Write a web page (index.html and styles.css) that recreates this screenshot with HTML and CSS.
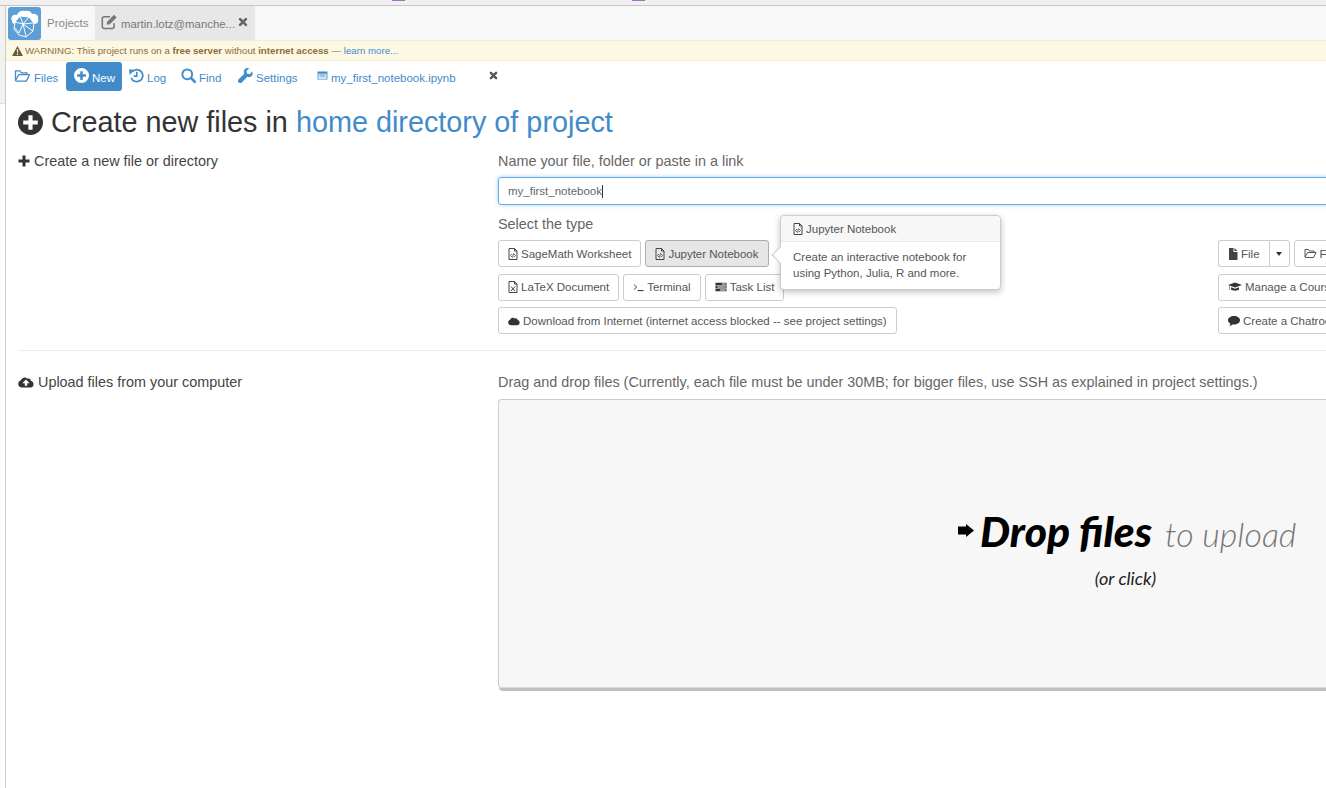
FILE: index.html
```html
<!DOCTYPE html>
<html lang="en">
<head>
<meta charset="utf-8">
<title>Create new files</title>
<link rel="stylesheet" href="styles.css">
</head>
<body>
<svg class="sprite" width="0" height="0" aria-hidden="true">
  <symbol id="i-plus-circle" viewBox="0 0 24 24"><path fill-rule="evenodd" d="M12 0a12 12 0 1 1 0 24a12 12 0 0 1 0-24zM10 5v5H5v4h5v5h4v-5h5v-4h-5V5z"/></symbol>
  <symbol id="i-folder" viewBox="0 0 26 22"><path fill="none" stroke="currentColor" stroke-width="2" stroke-linejoin="round" d="M2 18V3h7l2 3h9v3M2 18l5-9h17l-5 10H3z"/></symbol>
  <symbol id="i-history" viewBox="0 0 24 24"><path fill="none" stroke="currentColor" stroke-width="2.8" d="M5 6a9.6 9.6 0 1 1-1.6 9.5"/><path d="M0 2l9 1-8 8z"/><path fill="none" stroke="currentColor" stroke-width="2.6" d="M12.500 6v7h-5"/></symbol>
  <symbol id="i-search" viewBox="0 0 24 24"><circle cx="10" cy="10" r="7.8" fill="none" stroke="currentColor" stroke-width="3.2"/><path fill="none" stroke="currentColor" stroke-width="4" stroke-linecap="round" d="M16 16l6 6"/></symbol>
  <symbol id="i-wrench" viewBox="0 0 24 24"><path d="M23 5.500l-4.600 4.400-4-1-1-4L18 .5c-3-1-6.500 0-8 2.500-1.200 2-1 4 0 6L1 18a3.300 3.300 0 0 0 5 5l9-9c2 1 4 1 6-.5 2.500-1.500 3-5.500 2-8.500z"/></symbol>
  <symbol id="i-list-box" viewBox="0 0 24 20"><path fill-rule="evenodd" d="M1 1h22v18H1zM3 6v11h18V6z"/><path d="M5 8h14v2H5zM5 12h14v2H5z"/></symbol>
  <symbol id="i-times" viewBox="0 0 24 24"><path fill="none" stroke="currentColor" stroke-width="6.500" stroke-linecap="round" d="M5 5l14 14M19 5L5 19"/></symbol>
  <symbol id="i-edit" viewBox="0 0 26 24"><path fill="none" stroke="currentColor" stroke-width="2.400" d="M20 14v5a3 3 0 0 1-3 3H5a3 3 0 0 1-3-3V7a3 3 0 0 1 3-3h9"/><path d="M9 12L20 1l4 4-11 11H9z"/></symbol>
  <symbol id="i-warning" viewBox="0 0 24 22"><path fill-rule="evenodd" d="M12 0l12 22H0zM10.500 7l.5 8h2l.5-8zM10.500 17v3h3v-3z"/></symbol>
  <symbol id="i-plus" viewBox="0 0 24 24"><path d="M9 1h6v8h8v6h-8v8H9v-8H1V9h8z"/></symbol>
  <symbol id="i-file-code" viewBox="0 0 20 24"><path fill="none" stroke="currentColor" stroke-width="2" d="M2 1h11l5 5v17H2zM13 1v5h5"/><path fill="none" stroke="currentColor" stroke-width="1.600" d="M8 12l-3 3 3 3M12 12l3 3-3 3M11 10.500l-2 9"/></symbol>
  <symbol id="i-file-x" viewBox="0 0 20 24"><path fill="none" stroke="currentColor" stroke-width="2" d="M2 1h11l5 5v17H2zM13 1v5h5"/><path fill="none" stroke="currentColor" stroke-width="2" d="M6 11l8 9M14 11l-8 9"/></symbol>
  <symbol id="i-terminal" viewBox="0 0 26 20"><path fill="none" stroke="currentColor" stroke-width="2" d="M2 3l7 6-7 6"/><path d="M11 16h14v2.500H11z"/></symbol>
  <symbol id="i-tasks" viewBox="0 0 26 20"><path fill-rule="evenodd" d="M1 1h24v5H1zM15 2.500V4.500h8V2.500zM1 7.500h24v5H1zM5 9v2h18V9zM1 14h24v5H1zM11 15.500v2h12v-2z"/></symbol>
  <symbol id="i-cloud" viewBox="0 0 26 18"><path d="M6 18a6 6 0 0 1-1.500-11.700A6.500 6.500 0 0 1 15 3.500a4.500 4.500 0 0 1 6 3.500A5.600 5.600 0 0 1 20.500 18z"/></symbol>
  <symbol id="i-cloud-up" viewBox="0 0 26 18"><path fill-rule="evenodd" d="M6 18a6 6 0 0 1-1.500-11.700A6.500 6.500 0 0 1 15 3.500a4.500 4.500 0 0 1 6 3.500A5.600 5.600 0 0 1 20.500 18zM13 5l-6 6h4v4h4v-4h4z"/></symbol>
  <symbol id="i-file" viewBox="0 0 20 24"><path d="M2 0h9v8h8v16H2zM13 0l6 6h-6z"/></symbol>
  <symbol id="i-cap" viewBox="0 0 28 20"><path d="M14 1L0 6l14 5 14-5zM6 10.500V15c3 3 13 3 16 0v-4.500l-8 3z"/><path d="M2 7h1v9H2z"/></symbol>
  <symbol id="i-comment" viewBox="0 0 24 20"><path d="M12 0c6.600 0 12 3.600 12 8.500S18.600 17 12 17c-1 0-2 0-3-.2C7.500 18.500 5 19.500 2.500 20c1.300-1.500 2-3 2.200-4.700C1.800 13.800 0 11.300 0 8.500 0 3.600 5.400 0 12 0z"/></symbol>
  <symbol id="i-arrow" viewBox="0 0 20 16"><path d="M0 3h10V0l10 8-10 8v-3H0z"/></symbol>
</svg>

<div class="chrome-top">
  <span class="mark mark-a"></span>
  <span class="mark mark-b"></span>
</div>

<div class="shell">
  <div class="gutter"><div class="gutter-top"></div></div>
  <div class="app">
    <header class="topnav">
      <div class="logo">
        <svg viewBox="0 0 33 33" width="33" height="33">
          <path fill="#fff" d="M4 14c-2-4 1-7 5-6 1-4 5-5 8-4 3-1 6 0 7 3 4-1 7 2 6 5 1 3-1 5-4 5H7c-2 0-3-1-3-3z"/>
          <path fill="#5b9fd6" d="M7 15l5-6 9 1 5 6-1 8-7 6-7-2-5-6z"/>
          <path fill="none" stroke="#fff" stroke-width="1" d="M7 15l5-6 9 1 5 6-1 8-7 6-7-2-5-6zM12 9l3 8 6-7M15 17l10-1M15 17l-8-2M15 17l-4 9M15 17l3 12M15 17l10 7M7 21l4 5"/>
        </svg>
      </div>
      <a class="tab-projects">Projects</a>
      <div class="tab-project">
        <svg class="ic ic-edit"><use href="#i-edit"/></svg>
        <span>martin.lotz@manche...</span>
        <svg class="ic ic-close"><use href="#i-times"/></svg>
      </div>
    </header>

    <div class="warning">
      <svg class="ic ic-warn"><use href="#i-warning"/></svg>
      <span>WARNING: This project runs on a <b>free server</b> without <b>internet access</b> — <a>learn more...</a></span>
    </div>

    <nav class="tabs">
      <a class="tab tab-files"><svg class="ic ic-folder"><use href="#i-folder"/></svg>Files</a>
      <a class="tab tab-new"><svg class="ic ic-new"><use href="#i-plus-circle"/></svg>New</a>
      <a class="tab tab-log"><svg class="ic ic-nav"><use href="#i-history"/></svg>Log</a>
      <a class="tab tab-find"><svg class="ic ic-nav"><use href="#i-search"/></svg>Find</a>
      <a class="tab tab-settings"><svg class="ic ic-nav"><use href="#i-wrench"/></svg>Settings</a>
      <a class="tab tab-file"><svg class="ic ic-listbox"><use href="#i-list-box"/></svg>my_first_notebook.ipynb</a>
      <svg class="ic ic-tabclose"><use href="#i-times"/></svg>
    </nav>

    <main class="content">
      <h1 class="title"><svg class="ic ic-title"><use href="#i-plus-circle"/></svg>Create new files in <a>home directory of project</a></h1>

      <section class="row row-create">
        <h2 class="side"><svg class="ic ic-side"><use href="#i-plus"/></svg>Create a new file or directory</h2>
        <div class="main-col">
          <div class="label">Name your file, folder or paste in a link</div>
          <div class="input"><span>my_first_notebook</span><i class="caret"></i></div>
          <div class="label label-type">Select the type</div>
          <div class="types">
            <div class="type-left">
              <div class="btn-row">
                <a class="btn"><svg class="ic ic-btn"><use href="#i-file-code"/></svg>SageMath Worksheet</a>
                <a class="btn btn-active"><svg class="ic ic-btn"><use href="#i-file-code"/></svg>Jupyter Notebook</a>
              </div>
              <div class="btn-row">
                <a class="btn"><svg class="ic ic-btn"><use href="#i-file-x"/></svg>LaTeX Document</a>
                <a class="btn"><svg class="ic ic-term"><use href="#i-terminal"/></svg>Terminal</a>
                <a class="btn"><svg class="ic ic-wide"><use href="#i-tasks"/></svg>Task List</a>
              </div>
              <div class="btn-row">
                <a class="btn"><svg class="ic ic-wide"><use href="#i-cloud"/></svg>Download from Internet (internet access blocked -- see project settings)</a>
              </div>
              <div class="popover">
                <div class="pop-arrow"></div>
                <div class="pop-title"><svg class="ic ic-btn"><use href="#i-file-code"/></svg>Jupyter Notebook</div>
                <div class="pop-body">Create an interactive notebook for using Python, Julia, R and more.</div>
              </div>
            </div>
            <div class="type-right">
              <div class="btn-row">
                <div class="split">
                  <a class="btn split-main"><svg class="ic ic-btn"><use href="#i-file"/></svg>File</a>
                  <a class="btn split-caret"><i class="tri"></i></a>
                </div>
                <a class="btn"><svg class="ic ic-folder-sm"><use href="#i-folder"/></svg>Folder</a>
              </div>
              <div class="btn-row"><a class="btn"><svg class="ic ic-cap"><use href="#i-cap"/></svg>Manage a Course</a></div>
              <div class="btn-row"><a class="btn"><svg class="ic ic-wide"><use href="#i-comment"/></svg>Create a Chatroom</a></div>
            </div>
          </div>
        </div>
      </section>

      <hr class="rule">

      <section class="row row-upload">
        <h2 class="side"><svg class="ic ic-wide2"><use href="#i-cloud-up"/></svg>Upload files from your computer</h2>
        <div class="main-col">
          <div class="label">Drag and drop files (Currently, each file must be under 30MB; for bigger files, use SSH as explained in project settings.)</div>
          <div class="dropzone">
            <div class="drop-msg">
              <div class="drop-main"><svg class="ic ic-drop"><use href="#i-arrow"/></svg><b>Drop files</b><span>to upload</span></div>
              <div class="drop-sub">(or click)</div>
            </div>
          </div>
        </div>
      </section>
    </main>
  </div>
</div>
</body>
</html>
```

FILE: styles.css
```css
* { box-sizing: border-box; }
html, body { margin: 0; height: 100%; overflow: hidden; background: #fff; }
body { font-family: "Liberation Sans", Arial, sans-serif; color: #555; font-size: 14px; width: 1326px; height: 788px; }
a { color: #428bca; text-decoration: none; }
.sprite { display: block; height: 0; }
.ic { fill: currentColor; flex: none; display: inline-block; }

.chrome-top { height: 6px; background: #f0f0f0; border-bottom: 1px solid #c6c6c6; display: flex; align-items: flex-start; }
.mark { display: block; height: 1px; width: 13px; background: #a86cc0; }
.mark-a { margin-left: 392px; }
.mark-b { margin-left: 227px; }

.shell { display: flex; height: 782px; }
.gutter { width: 6px; flex: none; border-right: 1px solid #d3cbc3; }
.gutter-top { height: 98px; background: #f2f2f2; border-bottom: 1px solid #ddd; }
.app { flex: 1; min-width: 0; }

.topnav { height: 34px; display: flex; background: #f8f8f8; padding-left: 2px; }
.logo { width: 33px; height: 33px; background: #5b9fd6; border-radius: 3px; margin-top: 1px; }
.tab-projects { width: 54px; padding: 11px 0 0 6px; font-size: 11.500px; color: #888; white-space: nowrap; }
.tab-project { width: 160px; background: #e7e7e7; display: flex; align-items: flex-start; padding: 9px 0 0 6px; font-size: 11.400px; color: #777; white-space: nowrap; }
.ic-edit { width: 17px; height: 16px; margin-right: 3px; color: #777; margin-top: -1px; }
.tab-project span { margin-top: 3px; }
.ic-close { width: 10px; height: 10px; margin: 2px 0 0 3px; color: #666; }

.warning { height: 21px; margin-left: 0; background: #fcf8e3; border-top: 1px solid #f5ecd0; border-bottom: 1px solid #f5ecd0; display: flex; align-items: center; padding-left: 6px; font-size: 9.700px; color: #8a6d3b; white-space: nowrap; }
.warning b { font-weight: bold; }
.ic-warn { width: 11px; height: 10px; margin-right: 2px; color: #6a5a3a; }

.tabs { height: 30px; display: flex; align-items: center; font-size: 11.500px; padding-left: 8px; position: relative; }
.tab { height: 29px; display: flex; align-items: center; color: #428bca; white-space: nowrap; padding-top: 3px; }
.tab .ic { margin-top: -4px; }
.tab-files { width: 52px; }
.tab-new { width: 56px; background: #428bca; color: #fff; border-radius: 3px; padding-left: 8px; }
.tab-log { width: 52px; padding-left: 7px; }
.tab-find { width: 64px; padding-left: 7px; }
.tab-settings { width: 79px; }
.tab-file { width: 172px; color: #428bca; font-size: 11.500px; }
.ic-folder { width: 17px; height: 14px; margin-right: 3px; }
.ic-new { width: 15px; height: 15px; margin-right: 3px; }
.ic-nav { width: 15px; height: 15px; margin-right: 3px; }
.ic-listbox { width: 11px; height: 9px; margin-right: 3px; color: #428bca; }
.ic-tabclose { width: 9px; height: 9px; color: #555; margin: -2px 0 0 0; }

.content { padding: 0 0 0 12px; width: 1500px; }
.title { margin: 13px 0 0; height: 37px; font-size: 28.800px; font-weight: 400; color: #333; display: flex; align-items: center; white-space: pre; line-height: 37px; }
.ic-title { width: 25px; height: 25px; margin-right: 8px; color: #333; }

.row { display: flex; }
.side { width: 480px; flex: none; margin: 0; font-size: 14.400px; font-weight: 400; color: #444; display: flex; align-items: center; height: 20px; }
.main-col { flex: 1; min-width: 0; }
.row-create { margin-top: 10px; }
.ic-side { width: 12px; height: 12px; margin-right: 4px; color: #333; }
.ic-wide2 { width: 16px; height: 12px; margin-right: 4px; color: #333; }
.label { font-size: 14.400px; height: 20px; line-height: 20px; color: #666; white-space: nowrap; }
.input { height: 28px; margin-top: 6px; border: 1px solid #66afe9; border-radius: 3px; box-shadow: 0 0 4px rgba(102,175,233,.6); display: flex; align-items: center; padding-left: 9px; font-size: 11.500px; color: #666; }
.caret { width: 1px; height: 13px; background: #333; display: block; }
.label-type { margin-top: 9px; }
.types { display: flex; margin-top: 6px; }
.type-left { width: 720px; flex: none; position: relative; }
.type-right { flex: 1; }
.btn-row { display: flex; gap: 4px; height: 27px; margin-bottom: 6.500px; }
.btn { height: 27px; padding: 0 9px; border: 1px solid #ccc; border-radius: 3px; background: #fff; display: flex; align-items: center; font-size: 11.500px; color: #555; white-space: nowrap; }
.btn-active { background: #e6e6e6; border-color: #adadad; }
.ic-btn { width: 10px; height: 12px; margin-right: 3px; color: #444; }
.ic-term { width: 11px; height: 9px; margin-right: 3px; color: #333; }
.ic-wide { width: 12px; height: 10px; margin-right: 3px; color: #333; }
.ic-cap { width: 14px; height: 10px; margin-right: 3px; color: #333; }
.ic-folder-sm { width: 13px; height: 11px; margin-right: 3px; color: #555; }

.split { display: flex; }
.split-main { border-radius: 3px 0 0 3px; border-right: 0; }
.split-caret { width: 21px; padding: 0; justify-content: center; border-radius: 0 3px 3px 0; }
.tri { display: block; border-left: 3.500px solid transparent; border-right: 3.500px solid transparent; border-top: 4px solid #333; }

.popover { position: absolute; left: 282px; top: -25px; width: 221px; height: 75px; background: #fff; border: 1px solid #ccc; border-radius: 4px; box-shadow: 0 2px 6px rgba(0,0,0,.25); font-size: 11.500px; color: #555; z-index: 2; }
.pop-arrow { position: absolute; left: -7px; top: 33px; width: 12px; height: 12px; background: #fff; border-left: 1px solid #ccc; border-bottom: 1px solid #ccc; transform: rotate(45deg); }
.pop-title { height: 26px; background: #f7f7f7; border-bottom: 1px solid #ebebeb; border-radius: 4px 4px 0 0; display: flex; align-items: center; padding-left: 12px; position: relative; }
.pop-body { padding: 7px 12px 0; line-height: 16px; position: relative; }

.rule { margin: 9px 0 0; border: 0; border-top: 1px solid #eee; width: 1308px; }
.row-upload { margin-top: 21px; }
.row-upload .side { color: #444; }
.dropzone { margin-top: 7px; width: 900px; height: 289px; border: 1px solid #ddd; border-top-color: #ccc; border-left-color: #ccc; border-radius: 4px; background: #f7f7f7; box-shadow: 1px 3px 0 #c0c0c0; padding-top: 102px; padding-left: 459px; }
.drop-msg { width: 340px; color: #111; }
.drop-main { display: flex; align-items: center; font-family: "Lato", sans-serif; font-size: 42.500px; line-height: 52px; white-space: pre; font-style: italic; }
.drop-main b { font-weight: 900; color: #000; }
.drop-main span { font-weight: 300; font-size: 34px; color: #777; margin: 6px 0 0 13px; }
.ic-drop { width: 16px; height: 13px; margin-right: 6px; color: #000; margin-top: 0; }
.drop-sub { font-family: "Lato", sans-serif; font-style: italic; font-size: 18px; text-align: center; width: 335px; color: #222; margin-top: 8px; line-height: 20px; }
```
